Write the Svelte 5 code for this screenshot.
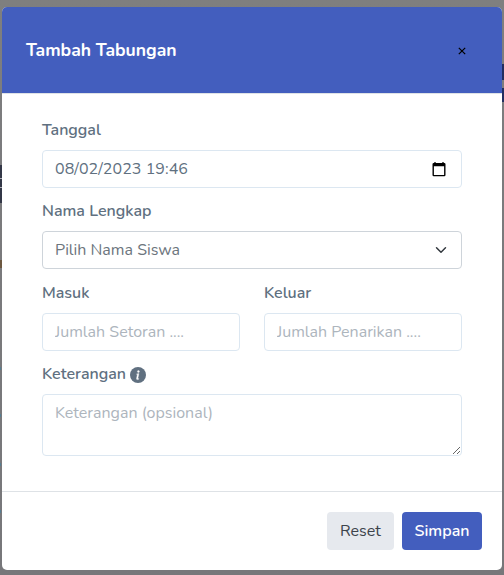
<script>
  let date = $state('08/02/2023 19:46');
  let student = $state('');
  let deposit = $state('');
  let withdrawal = $state('');
  let note = $state('');

  function reset() {
    student = '';
    deposit = '';
    withdrawal = '';
    note = '';
  }
</script>

<div class="backdrop">
  <div class="behind left" aria-hidden="true">
    <i class="dark"></i><i class="amber"></i><i class="line a"></i><i class="line b"></i>
    <i class="blue a"></i><i class="blue b"></i><i class="blue c"></i><i class="blue d"></i>
  </div>
  <div class="behind right" aria-hidden="true"><i class="navy"></i><i class="navy second"></i></div>

  <form class="modal" onsubmit={(e) => e.preventDefault()}>
    <header>
      <h5>Tambah Tabungan</h5>
      <button type="button" class="close" aria-label="Tutup">
        <svg width="8" height="8" viewBox="0 0 8 8"><path d="M.8.8 7.2 7.2M7.2.8.8 7.2" stroke="#000" stroke-width="1.2" /></svg>
      </button>
    </header>

    <main>
      <label for="date" class="l-date">Tanggal</label>
      <div class="control">
        <input id="date" class="date" bind:value={date} />
        <svg class="calendar" width="14" height="15" viewBox="0 0 14 15">
          <path d="M3 0v2M11 0v2" stroke="#000" stroke-width="1.3" />
          <path fill-rule="evenodd" d="M1.7 1h10.6a1.2 1.2 0 0 1 1.2 1.2v10.9a1.2 1.2 0 0 1-1.2 1.2H1.7A1.2 1.2 0 0 1 .5 13.100V2.200A1.2 1.2 0 0 1 1.700 1zM1.900 4.300v8.700h10.200V4.300z" />
        </svg>
      </div>

      <label for="student" class="l-name">Nama Lengkap</label>
      <div class="control">
        <select id="student" bind:value={student}>
          <option value="">Pilih Nama Siswa</option>
        </select>
        <svg class="chevron" width="12" height="12" viewBox="0 0 16 16">
          <path d="m2 5 6 6 6-6" fill="none" stroke="#343a40" stroke-width="2" stroke-linecap="round" stroke-linejoin="round" />
        </svg>
      </div>

      <div class="row">
        <div>
          <label for="in">Masuk</label>
          <input id="in" placeholder="Jumlah Setoran ...." bind:value={deposit} />
        </div>
        <div>
          <label for="out">Keluar</label>
          <input id="out" placeholder="Jumlah Penarikan ...." bind:value={withdrawal} />
        </div>
      </div>

      <label for="note" class="l-note"><span>Keterangan</span>
        <svg width="16" height="16" viewBox="0 0 16 16">
          <circle cx="8" cy="8" r="8" fill="#607080" />
          <path fill="#fff" stroke="#fff" stroke-width=".35" d="m8.93 6.588-2.29.287-.082.38.45.083c.294.07.352.176.288.469l-.738 3.468c-.194.897.105 1.319.808 1.319.545 0 1.178-.252 1.465-.598l.088-.416c-.2.176-.492.246-.686.246-.275 0-.375-.193-.304-.533zM9.400 4.500a1 1 0 1 1-2 0 1 1 0 0 1 2 0z" />
        </svg>
      </label>
      <textarea id="note" placeholder="Keterangan (opsional)" bind:value={note}></textarea>
    </main>

    <footer>
      <button type="button" class="reset" onclick={reset}>Reset</button>
      <button type="submit" class="save">Simpan</button>
    </footer>
  </form>
</div>

<style>
  :global(body) { margin: 0; overflow: hidden; }
  * { box-sizing: border-box; }
  .backdrop {
    position: relative;
    height: 575px;
    padding: 7px 2px 5px;
    background: linear-gradient(#7f7f7f, #7b7b7d 30%, #77777a);
    font: 400 16px/24px Nunito, Lato, sans-serif;
    color: #607080;
  }
  .behind { position: absolute; top: 0; bottom: 0; width: 2px; }
  .left { left: 0; }
  .right { right: 0; }
  .behind i { position: absolute; left: 0; width: 2px; }
  .dark { top: 165px; height: 38px; background: #333747; }
  .amber { top: 260px; height: 8px; background: #6c5840; }
  .line { height: 1px; background: #aaaab2; }
  .line.a { top: 178px; }
  .line.b { top: 187px; }
  .behind .blue { width: 1px; height: 3px; background: #557e92; }
  .blue.a { top: 367px; }
  .blue.b { top: 414px; }
  .blue.c { top: 463px; }
  .blue.d { top: 510px; }
  .navy { top: 64px; height: 16px; background: #222e60; }
  .navy.second { top: 88px; height: 14px; }

  .modal {
    position: relative;
    display: flex;
    flex-direction: column;
    height: 563px;
    background: #fff;
    border-radius: 5px;
    overflow: hidden;
  }
  header {
    display: flex;
    align-items: center;
    justify-content: space-between;
    height: 87px;
    padding: 0 36px 0 24px;
    background: #435ebe;
    border-bottom: 1px solid #dee2e6;
  }
  h5 { margin: 0; font-size: 17.6px; line-height: 24px; font-weight: 700; color: #fff; }
  button { border: 0; font: inherit; display: flex; align-items: center; justify-content: center; white-space: nowrap; }
  .close { padding: 0; background: none; margin-top: 2px; }
  main { flex: 1; padding: 24px 40px 0; }
  label { display: flex; align-items: center; height: 24px; margin-bottom: 8px; font-weight: 600; }
  .l-name { margin-top: 11px; }
  .row { display: grid; grid-template-columns: 1fr 1fr; gap: 24px; margin: 12px 0 11px; }
  .control { display: grid; }
  .control > * { grid-area: 1 / 1; }
  .control > svg { justify-self: end; align-self: center; pointer-events: none; }
  .calendar { margin-right: 16px; }
  .chevron { margin-right: 15px; }
  input, select, textarea {
    display: block;
    width: 100%;
    height: 38px;
    margin: 0;
    padding: 6px 12px;
    font: inherit;
    color: #607080;
    background: #fff;
    border: 1px solid #dce7f1;
    border-radius: 4px;
    outline: 0;
  }
  .date { letter-spacing: .06px; }
  select { appearance: none; border-color: #ced4da; color: #6c757d; }
  textarea { height: 62px; resize: both; }
  ::placeholder { color: #adb5bd; opacity: 1; }
  .l-note svg { margin: 2px 0 0 4px; }
  footer {
    display: flex;
    justify-content: flex-end;
    align-items: flex-start;
    gap: 8px;
    height: 79px;
    padding: 20px 20px 0;
    border-top: 1px solid #dee2e6;
  }
  footer button { height: 38px; padding: 0; border-radius: 4px; }
  .reset { width: 67px; background: #e6e9ee; color: #3c434b; }
  .save { width: 80px; background: #435ebe; color: #fff; font-weight: 600; }
</style>
